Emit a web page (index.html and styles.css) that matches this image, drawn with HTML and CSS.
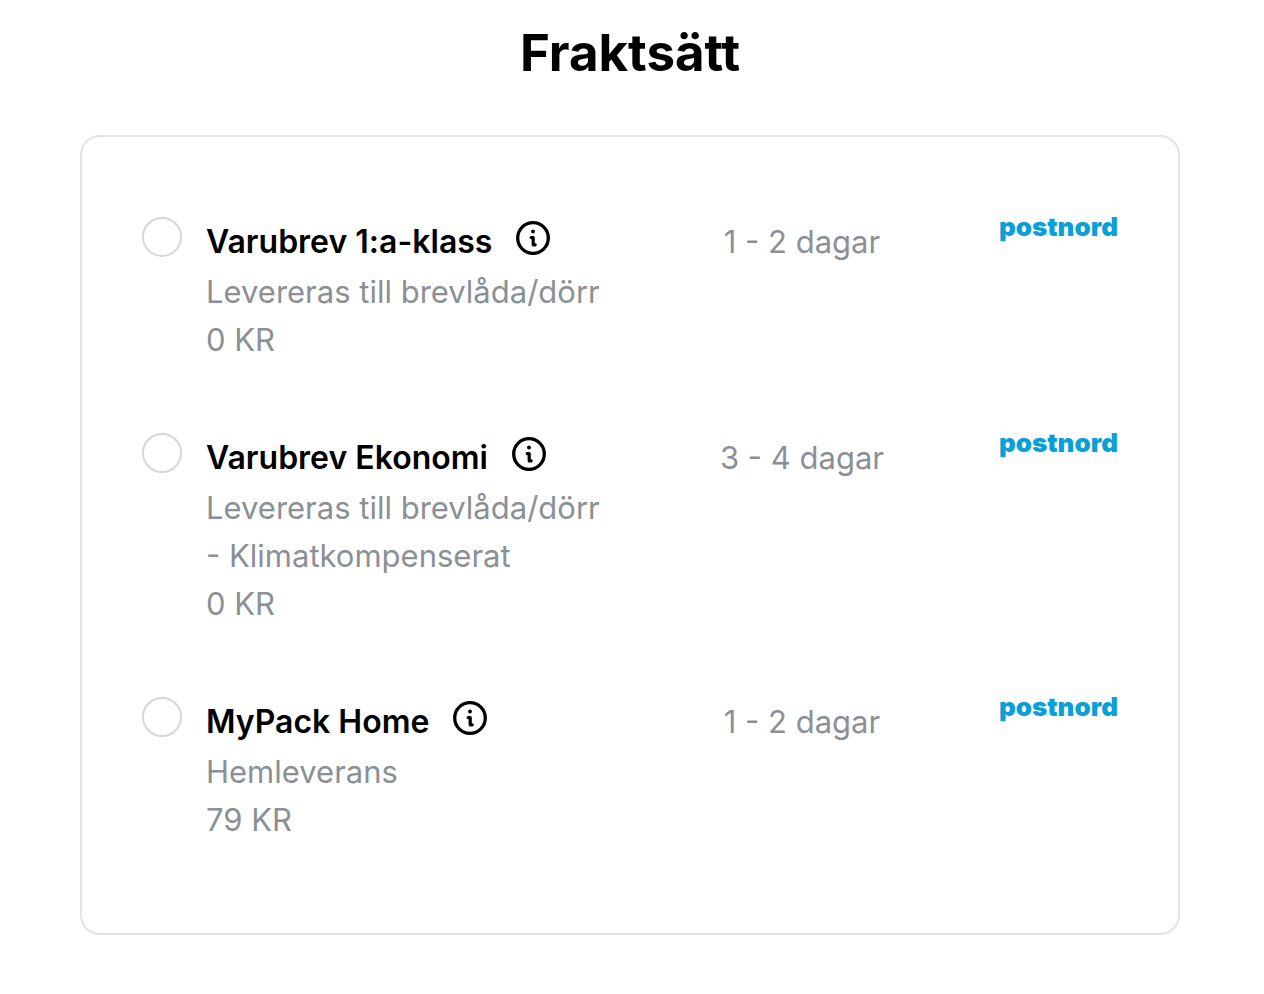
FILE: index.html
```html
<!DOCTYPE html>
<html lang="sv">
<head>
<meta charset="utf-8">
<meta name="viewport" content="width=device-width, initial-scale=1">
<title>Fraktsätt</title>
<link rel="stylesheet" href="styles.css">
</head>
<body>
<svg class="sprite" aria-hidden="true">
  <symbol id="info" viewBox="0 0 34 34">
    <circle cx="17" cy="17" r="15.3" fill="none" stroke="currentColor" stroke-width="3.3"/>
    <circle cx="17" cy="10.5" r="1.9" fill="currentColor"/>
    <path d="M15.2 16.6h2v7.2h2" fill="none" stroke="currentColor" stroke-width="3.2" stroke-linecap="round" stroke-linejoin="round"/>
  </symbol>
</svg>
<main class="page">
  <h1 class="heading">Fraktsätt</h1>
  <form class="card">
    <div class="option">
      <input class="radio" type="radio" name="shipping" id="first-class">
      <div class="details">
        <div class="title-row">
          <label class="title" for="first-class">Varubrev 1:a-klass</label>
          <button class="info" type="button" aria-label="Mer information"><svg class="info-icon"><use href="#info"/></svg></button>
        </div>
        <p class="text">Levereras till brevlåda/dörr</p>
        <p class="text">0 KR</p>
      </div>
      <span class="time">1 - 2 dagar</span>
      <span class="logo">postnord</span>
    </div>
    <div class="option">
      <input class="radio" type="radio" name="shipping" id="economy">
      <div class="details">
        <div class="title-row">
          <label class="title" for="economy">Varubrev Ekonomi</label>
          <button class="info" type="button" aria-label="Mer information"><svg class="info-icon"><use href="#info"/></svg></button>
        </div>
        <p class="text">Levereras till brevlåda/dörr -&nbsp;Klimatkompenserat</p>
        <p class="text">0 KR</p>
      </div>
      <span class="time">3 - 4 dagar</span>
      <span class="logo">postnord</span>
    </div>
    <div class="option">
      <input class="radio" type="radio" name="shipping" id="home">
      <div class="details">
        <div class="title-row">
          <label class="title" for="home">MyPack Home</label>
          <button class="info" type="button" aria-label="Mer information"><svg class="info-icon"><use href="#info"/></svg></button>
        </div>
        <p class="text">Hemleverans</p>
        <p class="text">79 KR</p>
      </div>
      <span class="time">1 - 2 dagar</span>
      <span class="logo">postnord</span>
    </div>
  </form>
</main>
</body>
</html>
```
FILE: styles.css
```css
* { box-sizing: border-box; }
body {
  margin: 0;
  background: #fff;
  color: #000;
  font-family: Inter, "Liberation Sans", sans-serif;
  font-size: 31px;
  line-height: 48px;
}
.sprite { display: none; }
.page { padding: 23px 84px 58px 80px; }
.heading {
  margin: 0 0 52px;
  font-size: 51px;
  line-height: 60px;
  font-weight: 700;
  text-align: center;
}
.card {
  display: flex;
  flex-direction: column;
  gap: 69px;
  padding: 80px 60px 89px;
  border: 2px solid #e2e3e4;
  border-radius: 20px;
}
.option {
  display: grid;
  grid-template-columns: 40px minmax(0, 1fr) 180px 226px;
  align-items: start;
}
.radio {
  appearance: none;
  width: 40px;
  height: 40px;
  margin: 0;
  border: 2px solid #d5d8da;
  border-radius: 50%;
  background: #fff;
}
.radio:checked { border: 12px solid #000; }
.details { padding: 1px 104px 0 24px; }
.title-row {
  display: flex;
  align-items: flex-start;
  gap: 24px;
  padding-bottom: 2px;
}
.title { font-size: 32px; font-weight: 600; }
.info {
  width: 34px;
  height: 34px;
  margin-top: 3px;
  padding: 0;
  border: 0;
  background: none;
  color: #000;
}
.info-icon { display: block; width: 34px; height: 34px; }
.text { margin: 0; color: #8a9096; }
.time { padding-top: 1px; color: #8a9096; text-align: center; }
.logo {
  color: #0a9fd6;
  font-size: 26px;
  line-height: 20px;
  font-weight: 900;
  text-align: right;
}
```
